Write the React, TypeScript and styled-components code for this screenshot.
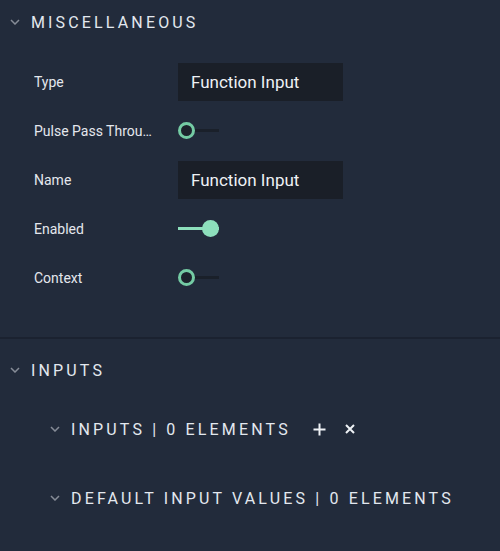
import React from "react";
import styled, { createGlobalStyle } from "styled-components";

const Global = createGlobalStyle`
  html, body { margin: 0; padding: 0; background: #222b3b; }
  body { font-family: Roboto, "Liberation Sans", sans-serif; }
`;

const Panel = styled.div`
  width: 500px;
  height: 551px;
  background: #222b3b;
  overflow: hidden;
`;

const Section = styled.section<{ $divider?: boolean }>`
  border-bottom: ${(p) => (p.$divider ? "2px solid #1b2230" : "none")};
`;

const Header = styled.div<{ $indent: number; $height: number }>`
  display: flex;
  align-items: center;
  height: ${(p) => p.$height}px;
  padding-left: ${(p) => p.$indent}px;
  gap: 11px;
`;

const Title = styled.span`
  font-size: 16px;
  letter-spacing: 3.15px;
  color: #e3e8ef;
  text-transform: uppercase;
  white-space: nowrap;
`;

const Chevron = () => (
  <svg width="10" height="6" viewBox="0 0 10 6" style={{ display: "block" }}>
    <path d="M1 1 L5 5 L9 1" fill="none" stroke="#868c97" strokeWidth="1.5" />
  </svg>
);

const Body = styled.div`
  padding: 13px 0 35px 34px;
`;

const Row = styled.div`
  display: grid;
  grid-template-columns: 144px 1fr;
  align-items: center;
  height: 49px;
`;

const Label = styled.span`
  font-size: 14px;
  color: #e4e7ed;
  white-space: nowrap;
  overflow: hidden;
  text-overflow: ellipsis;
  max-width: 123px;
`;

const Field = styled.div`
  width: 165px;
  height: 38px;
  box-sizing: border-box;
  background: #1a1f28;
  padding-left: 13px;
  display: flex;
  align-items: center;
  font-size: 17px;
  color: #eef1f5;
`;

const Track = styled.div<{ $on: boolean }>`
  position: relative;
  width: 41px;
  height: 17px;
  display: flex;
  align-items: center;
  justify-content: ${(p) => (p.$on ? "flex-end" : "flex-start")};
  &::before {
    content: "";
    position: absolute;
    left: 0;
    right: 0;
    top: 7px;
    height: 3px;
    background: ${(p) => (p.$on ? "#8ddfbc" : "#1a202a")};
  }
`;

const Knob = styled.div<{ $on: boolean }>`
  position: relative;
  width: 17px;
  height: 17px;
  box-sizing: border-box;
  border-radius: 50%;
  background: ${(p) => (p.$on ? "#8ddfbc" : "#1c222c")};
  border: ${(p) => (p.$on ? "none" : "3px solid #74cba4")};
`;

const Toggle = ({ on }: { on: boolean }) => (
  <Track $on={on}>
    <Knob $on={on} />
  </Track>
);

const Actions = styled.div`
  display: flex;
  align-items: center;
  gap: 19px;
  margin-left: 11px;
`;

const IconBtn = styled.span`
  display: flex;
  align-items: center;
  justify-content: center;
`;

const Gap = styled.div<{ $h: number }>`
  height: ${(p) => p.$h}px;
`;

export default function App() {
  return (
    <Panel>
      <Global />
      <Section $divider>
        <Header $indent={10} $height={44}>
          <Chevron />
          <Title>Miscellaneous</Title>
        </Header>
        <Body>
          <Row>
            <Label>Type</Label>
            <Field>Function Input</Field>
          </Row>
          <Row>
            <Label>Pulse Pass Through</Label>
            <Toggle on={false} />
          </Row>
          <Row>
            <Label>Name</Label>
            <Field>Function Input</Field>
          </Row>
          <Row>
            <Label>Enabled</Label>
            <Toggle on={true} />
          </Row>
          <Row>
            <Label>Context</Label>
            <Toggle on={false} />
          </Row>
        </Body>
      </Section>
      <Section>
        <Gap $h={9} />
        <Header $indent={10} $height={44}>
          <Chevron />
          <Title>Inputs</Title>
        </Header>
        <Gap $h={15} />
        <Header $indent={50} $height={44}>
          <Chevron />
          <Title>Inputs | 0 Elements</Title>
          <Actions>
            <IconBtn>
              <svg width="13" height="13" viewBox="0 0 13 13">
                <path d="M6.5 0.5 V12.5 M0.5 6.5 H12.5" stroke="#eef1f5" strokeWidth="2" />
              </svg>
            </IconBtn>
            <IconBtn>
              <svg width="10" height="10" viewBox="0 0 10 10">
                <path d="M1 1 L9 9 M9 1 L1 9" stroke="#eef1f5" strokeWidth="2" />
              </svg>
            </IconBtn>
          </Actions>
        </Header>
        <Gap $h={25} />
        <Header $indent={50} $height={44}>
          <Chevron />
          <Title>Default Input Values | 0 Elements</Title>
        </Header>
      </Section>
    </Panel>
  );
}
